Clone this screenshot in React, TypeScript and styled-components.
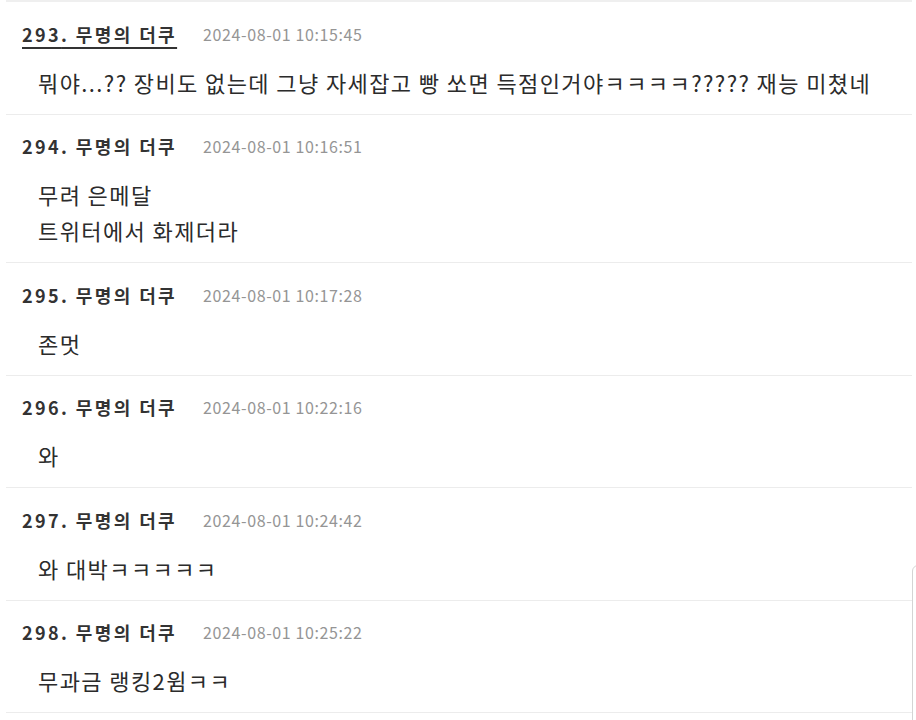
import React from "react";
import styled, { createGlobalStyle } from "styled-components";

const Global = createGlobalStyle`
  html, body { margin: 0; padding: 0; background: #fff; }
  body { font-family: "Noto Sans CJK KR", "Noto Sans", sans-serif; color: #333; }
`;

const Wrapper = styled.div`
  padding: 0 4px 0 6px;
`;

const List = styled.ul`
  list-style: none;
  margin: 0;
  padding: 0;
  border-top: 2px solid #efefef;
`;

const Item = styled.li`
  padding: 18.5px 16px 14px 16px;
  border-bottom: 1px solid #ececec;
`;

const Header = styled.div`
  display: flex;
  align-items: center;
  gap: 26px;
  height: 26px;
`;

const Title = styled.a<{ $active?: boolean }>`
  font-size: 18px;
  font-weight: 700;
  letter-spacing: 2.4px;
  color: #333;
  text-decoration: ${(p) => (p.$active ? "underline" : "none")};
  text-underline-offset: 5px;
  text-decoration-thickness: 2px;
  cursor: pointer;
`;

const DateText = styled.span`
  font-size: 16px;
  letter-spacing: 0.6px;
  color: #959595;
`;

const Content = styled.div`
  margin-top: 17px;
  padding-left: 16px;
  font-size: 22px;
  letter-spacing: 1.4px;
  line-height: 36px;
  color: #2b2b2b;
`;

const Floating = styled.div`
  position: fixed;
  left: 912px;
  top: 565px;
  width: 40px;
  height: 300px;
  border: 1px solid #d4d4d4;
  border-radius: 6px;
  background: #fff;
`;

const comments = [
  { no: 293, time: "2024-08-01 10:15:45", lines: ["뭐야...?? 장비도 없는데 그냥 자세잡고 빵 쏘면 득점인거야ㅋㅋㅋㅋ????? 재능 미쳤네"], active: true },
  { no: 294, time: "2024-08-01 10:16:51", lines: ["무려 은메달", "트위터에서 화제더라"] },
  { no: 295, time: "2024-08-01 10:17:28", lines: ["존멋"] },
  { no: 296, time: "2024-08-01 10:22:16", lines: ["와"] },
  { no: 297, time: "2024-08-01 10:24:42", lines: ["와 대박ㅋㅋㅋㅋㅋ"] },
  { no: 298, time: "2024-08-01 10:25:22", lines: ["무과금 랭킹2윔ㅋㅋ"] },
];

export default function App() {
  return (
    <>
      <Global />
      <Wrapper>
        <List>
          {comments.map((c) => (
            <Item key={c.no}>
              <Header>
                <Title $active={c.active}>{c.no}. 무명의 더쿠</Title>
                <DateText>{c.time}</DateText>
              </Header>
              <Content>
                {c.lines.map((l, i) => (
                  <div key={i}>{l}</div>
                ))}
              </Content>
            </Item>
          ))}
        </List>
      </Wrapper>
      <Floating />
    </>
  );
}
